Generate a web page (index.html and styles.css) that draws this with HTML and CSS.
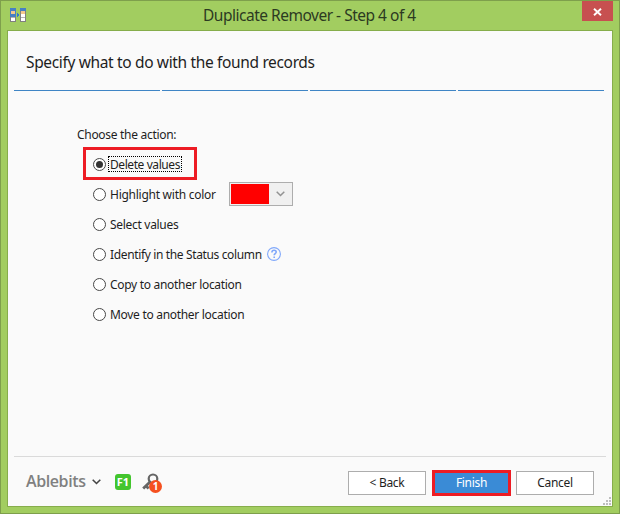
FILE: index.html
```html
<!DOCTYPE html>
<html lang="en">
<head>
<meta charset="utf-8">
<title>Duplicate Remover - Step 4 of 4</title>
<link rel="stylesheet" href="styles.css">
</head>
<body>
<div class="window">
  <header class="titlebar">
    <svg class="app-icon" width="16" height="14" viewBox="0 0 16 14" shape-rendering="crispEdges">
      <path fill="#808080" d="M0 0h6v14H0zM10 0h6v14h-6z"/>
      <path fill="#4580c4" d="M0 0h6v9H0zM10 0h6v3h-6z"/>
      <path fill="#f5c78c" d="M1 3h4v3H1zM11 3h4v3h-4z"/>
      <path fill="#fff" d="M1 10h4v3H1zM11 6h4v3h-4zM11 10h4v3h-4z"/>
      <path fill="#b4b4b4" d="M1 9h4v1H1zM11 9h4v1h-4z"/>
      <path fill="#3478cc" d="M7 5h1v4H7zM8 6h1v2H8z"/>
    </svg>
    <h1 class="title">Duplicate Remover - Step 4 of 4</h1>
    <button class="close" aria-label="Close"><svg width="9" height="8" viewBox="0 0 9 8"><path d="M1 .7l7 6.6M8 .7L1 7.3" stroke="#fff" stroke-width="1.9"/></svg></button>
  </header>
  <main class="client">
    <h2 class="heading">Specify what to do with the found records</h2>
    <div class="steps"><i></i><i></i><i></i><i></i></div>
    <section class="options">
      <p class="prompt">Choose the action:</p>
      <div class="option marked"><span class="radio checked"></span><span class="label focused">Delete values</span></div>
      <div class="option"><span class="radio"></span><span class="label highlight">Highlight with color</span>
        <span class="picker"><span class="swatch"></span><svg width="9" height="6" viewBox="0 0 9 6"><path d="M.7.7l3.8 3.8L8.3.7" fill="none" stroke="#929292" stroke-width="1.5"/></svg></span></div>
      <div class="option"><span class="radio"></span><span class="label">Select values</span></div>
      <div class="option"><span class="radio"></span><span class="label identify">Identify in the Status column</span>
        <svg class="help" width="14" height="14" viewBox="0 0 14 14"><circle cx="7" cy="7" r="6.4" fill="none" stroke="#80a8fa" stroke-width="1.1"/><path d="M4.9 5.4c0-1.4.9-2.1 2.2-2.1s2.1.7 2.1 1.8c0 1.5-2 1.6-2 3.2M7.2 9.5v1.5" fill="none" stroke="#80a8fa" stroke-width="1.6"/></svg></div>
      <div class="option"><span class="radio"></span><span class="label">Copy to another location</span></div>
      <div class="option"><span class="radio"></span><span class="label">Move to another location</span></div>
    </section>
    <footer class="footer">
      <span class="brand">Ablebits</span>
      <svg class="chevron" width="9" height="6" viewBox="0 0 9 6"><path d="M.7.8l3.8 3.7L8.3.8" fill="none" stroke="#444" stroke-width="1.6"/></svg>
      <span class="f1">F1</span>
      <span class="key">
        <svg width="17" height="17" viewBox="0 0 17 17"><circle cx="11" cy="5.8" r="4.3" fill="none" stroke="#666" stroke-width="2.2"/><path d="M8 9L1.2 15.6M3.6 12.6l3 3" fill="none" stroke="#666" stroke-width="2.8"/></svg>
        <span class="badge">1</span>
      </span>
      <div class="buttons">
        <button class="button">&lt; Back</button>
        <button class="button primary">Finish</button>
        <button class="button">Cancel</button>
      </div>
    </footer>
    <svg class="grip" width="8" height="8" viewBox="0 0 8 8" shape-rendering="crispEdges"><path fill="#bdbdbd" d="M6 0h2v2H6zM3 3h2v2H3zM6 3h2v2H6zM0 6h2v2H0zM3 6h2v2H3zM6 6h2v2H6z"/></svg>
  </main>
</div>
</body>
</html>
```
FILE: styles.css
```css
*, *::before, *::after { box-sizing: border-box; }
body { margin: 0; font-family: "Noto Sans", "Open Sans", sans-serif; font-size: 12px; color: #1e1e1e; }
h1, h2, p { margin: 0; font-weight: 400; }
button { font: inherit; border: 0; padding: 0; border-radius: 0; }
svg { display: block; flex: none; }
.window { width: 620px; height: 514px; border: 1px solid #7e9f4c; background: #a2cd60; padding: 0 6px 6px; }
.titlebar { height: 29px; display: flex; align-items: flex-start; }
.app-icon { margin: 7px 0 0 3px; }
.title { flex: 1; padding-left: 177px; font-size: 15.5px; line-height: 29px; letter-spacing: -0.49px; color: #2c3a22; white-space: nowrap; }
.close { width: 31px; height: 20px; background: #c75050; display: flex; align-items: center; justify-content: center; padding-top: 1px; }
.client { position: relative; height: 477px; border: 1px solid #86ad4b; background: #fafafa; display: flex; flex-direction: column; }
.heading { height: 59px; padding: 17px 0 0 18px; font-size: 15.5px; line-height: 28px; letter-spacing: -0.35px; white-space: nowrap; }
.steps { display: flex; gap: 2px; padding-left: 6px; }
.steps i { width: 146px; height: 1px; background: #3f85c5; }
.options { flex: 1; padding: 34px 0 0 69px; }
.prompt { height: 24px; line-height: 20px; letter-spacing: -0.3px; }
.option { position: relative; height: 30px; display: flex; align-items: center; padding-left: 16px; }
.marked::before { content: ""; position: absolute; left: 6px; top: -2px; width: 114px; height: 33px; border: 3px solid #ed1c24; }
.radio { width: 13px; height: 13px; border: 1.3px solid #484848; border-radius: 50%; background: #fff; display: flex; align-items: center; justify-content: center; }
.checked::after { content: ""; width: 7px; height: 7px; border-radius: 50%; background: #333; }
.label { margin-left: 4px; padding-top: 2px; line-height: 16px; letter-spacing: -0.3px; white-space: nowrap; }
.focused { margin-left: 2px; width: 74px; height: 16px; padding: 0 0 0 1px; border: 1px dotted #000; line-height: 16px; letter-spacing: -0.42px; }
.highlight { width: 106px; letter-spacing: -0.26px; }
.identify { width: 152px; letter-spacing: -0.36px; }
.picker { width: 64px; height: 24px; margin-left: 13px; border: 1px solid #adadad; background: #f0f0f0; display: flex; align-items: center; padding-left: 1px; gap: 7px; }
.swatch { width: 38px; height: 20px; background: #f00; }
.help { margin-left: 5px; }
.footer { height: 50px; margin: 0 6px; border-top: 1px solid #dadada; display: flex; align-items: center; padding-left: 12px; }
.brand { width: 61px; margin-top: -2px; font-family: "Open Sans", sans-serif; font-weight: 600; font-size: 16px; line-height: 20px; letter-spacing: -0.4px; color: #808080; }
.chevron { margin-left: 5px; }
.f1 { width: 16px; height: 16px; margin-left: 14px; border-radius: 3px; background: #43c52e; color: #fff; font: bold 11px/16px "Noto Sans", sans-serif; text-align: center; }
.key { position: relative; width: 20px; height: 20px; margin: 2px 0 0 11px; }
.badge { position: absolute; left: 7px; top: 7px; width: 13px; height: 13px; border-radius: 50%; background: #f5501f; color: #fff; font: bold 10px/13px "Noto Sans", sans-serif; text-align: center; }
.buttons { margin-left: auto; padding: 2px 12px 0 0; display: flex; align-items: center; }
.button { width: 78px; height: 24px; border: 1px solid #adadad; background: #fff; color: #1e1e1e; line-height: 20px; letter-spacing: -0.3px; }
.primary { width: 79px; height: 26px; margin: 0 5px 0 6px; border: 3px solid #ed1c24; background: #3a8bd6; color: #fff; line-height: 18px; }
.grip { position: absolute; right: 1px; bottom: 1px; }
```
